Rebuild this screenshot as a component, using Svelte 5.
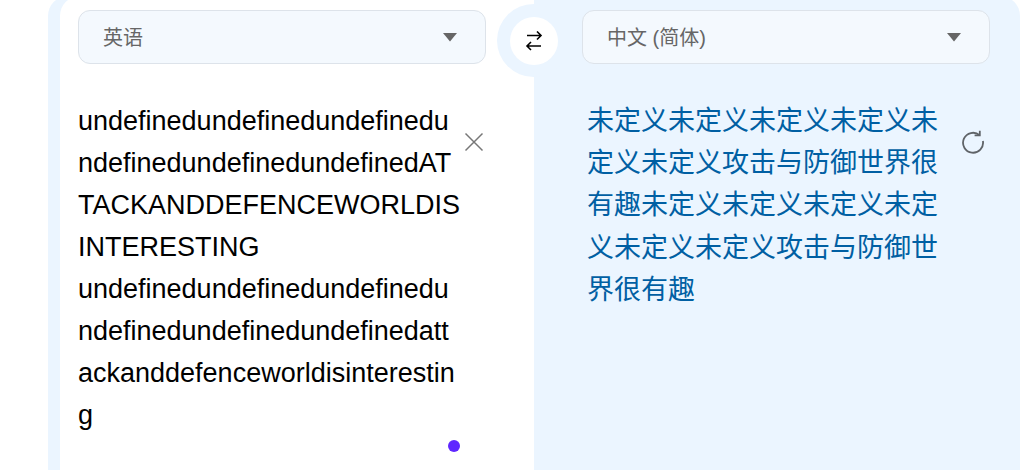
<script>
  const source = `undefinedundefinedundefinedundefinedundefinedundefinedATTACKANDDEFENCEWORLDISINTERESTING
undefinedundefinedundefinedundefinedundefinedundefinedattackanddefenceworldisinteresting`;
  const target = '未定义未定义未定义未定义未定义未定义攻击与防御世界很有趣未定义未定义未定义未定义未定义未定义攻击与防御世界很有趣';
</script>

<div class="shell">
  <section class="pane left">
    <button class="select">
      <span>英语</span>
      <svg class="caret" width="16" height="10" viewBox="0 0 16 10"><path d="M1 1h14L8 9.5z" /></svg>
    </button>
    <div class="body">
      <div class="text src">{source}</div>
      <button class="icon close" aria-label="清除">
        <svg width="22" height="22" viewBox="0 0 22 22"><path d="M2.5 2.5l17 17M19.5 2.5l-17 17" /></svg>
      </button>
    </div>
    <span class="dot"></span>
  </section>

  <section class="pane right">
    <button class="select">
      <span>中文 (简体)</span>
      <svg class="caret" width="16" height="10" viewBox="0 0 16 10"><path d="M1 1h14L8 9.5z" /></svg>
    </button>
    <div class="body">
      <div class="text dst">{target}</div>
      <button class="icon refresh" aria-label="刷新">
        <svg width="24" height="24" viewBox="0 0 24 24"><path d="M18.6 5.2A10 10 0 1 0 21.9 11" /><path d="M13.6 5.4h5.2V0.8" /></svg>
      </button>
    </div>
  </section>

  <div class="swap-ring">
    <button class="swap" aria-label="交换">
      <svg width="20" height="20" viewBox="0 0 20 20"><path d="M3 4.5h14M13 0.5l4 4-4 4M17 15H3M7 11l-4 4 4 4" /></svg>
    </button>
  </div>
</div>

<style>
  :global(body) {
    margin: 0;
    background: #fff;
    overflow: hidden;
  }
  .shell {
    position: relative;
    display: grid;
    grid-template-columns: 474px 486px;
    width: 960px;
    height: 474px;
    margin: -4px 0 0 48px;
    padding-left: 12px;
    background: #ebf5ff;
    border-radius: 20px 20px 0 0;
    font-family: "Liberation Sans", "Noto Sans CJK SC", sans-serif;
  }
  .pane {
    position: relative;
    padding-top: 14px;
  }
  .left {
    background: #fff;
    border-radius: 20px 0 0 0;
    padding-left: 18px;
  }
  .right {
    padding-left: 48px;
  }
  .select {
    display: flex;
    align-items: center;
    justify-content: space-between;
    box-sizing: border-box;
    width: 408px;
    height: 54px;
    padding: 0 27px 2px 24px;
    background: #f4f9fe;
    border: 1px solid #dde3ea;
    border-radius: 12px;
    font: inherit;
    font-size: 20px;
    color: #666;
  }
  .caret { margin-top: 2px; }
  .caret path { fill: #666; }
  .body {
    display: flex;
    align-items: flex-start;
    padding-top: 36px;
  }
  .text {
    font-size: 27px;
    line-height: 42px;
    word-break: break-all;
    white-space: pre-wrap;
  }
  .src {
    width: 384px;
    color: #000;
  }
  .dst {
    width: 355px;
    margin-left: 5px;
    line-height: 42.2px;
    color: #005fa3;
  }
  .icon {
    padding: 0;
    border: 0;
    background: none;
    display: block;
    line-height: 0;
  }
  .icon svg { fill: none; stroke-width: 1.5; }
  .close { margin: 31px 0 0 1px; }
  .close svg { stroke: #777; }
  .refresh { margin: 30px 0 0 18.5px; }
  .refresh svg { stroke: #5f6368; stroke-width: 1.8; }
  .dot {
    position: absolute;
    left: 388px;
    top: 444px;
    width: 12px;
    height: 12px;
    border-radius: 50%;
    background: #5f27ff;
  }
  .swap-ring {
    position: absolute;
    left: 449px;
    top: 8px;
    box-sizing: border-box;
    width: 73px;
    height: 73px;
    padding: 12.5px;
    border-radius: 50%;
    background: #ebf5ff;
  }
  .swap {
    display: flex;
    align-items: center;
    justify-content: center;
    width: 48px;
    height: 48px;
    padding: 0;
    border: 0;
    border-radius: 50%;
    background: #fff;
  }
  .swap svg { fill: none; stroke: #000; stroke-width: 1.6; }
</style>
